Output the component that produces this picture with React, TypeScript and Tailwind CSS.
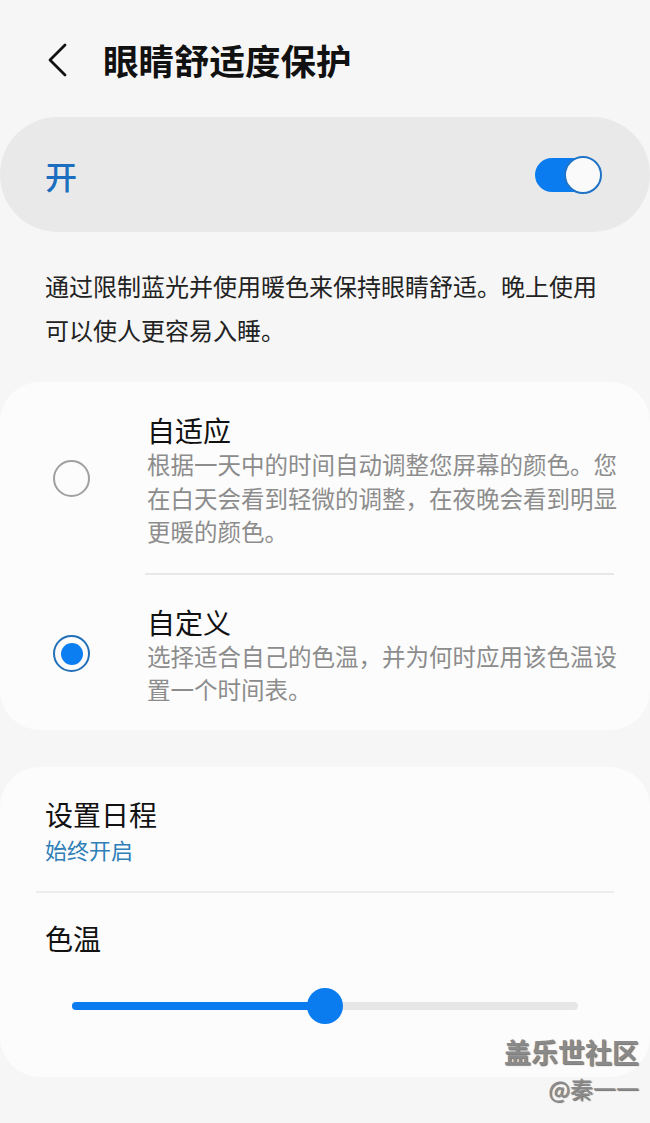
import React from 'react';

const font = { fontFamily: '"Noto Sans CJK SC", "Noto Sans", sans-serif' };

function Radio({ checked }: { checked: boolean }) {
  return checked ? (
    <div className="w-[37px] h-[37px] rounded-full border-[2.5px] border-[#2270b8] flex items-center justify-center">
      <div className="w-[22px] h-[22px] rounded-full bg-[#0b7ef2]" />
    </div>
  ) : (
    <div className="w-[37px] h-[37px] rounded-full border-2 border-[#a0a0a0]" />
  );
}

function Option({ title, desc, checked }: { title: string; desc: string; checked: boolean }) {
  return (
    <div className="flex items-center">
      <div className="pl-[53px] pr-[57px] shrink-0 -mt-[3px]">
        <Radio checked={checked} />
      </div>
      <div className="w-[483px]">
        <div className="text-[28px] leading-[36px] text-[#111]">{title}</div>
        <div className="text-[23.5px] leading-[33.5px] text-[#8c8c8c]">{desc}</div>
      </div>
    </div>
  );
}

export default function App() {
  const temp = 50;
  return (
    <div className="relative min-h-[1123px] w-[650px] bg-[#f6f6f6]" style={font}>
      {/* Header */}
      <div className="h-[117px] flex items-center pt-[3px]">
        <svg width="20" height="34" viewBox="0 0 20 34" className="ml-[47px]" fill="none">
          <polyline points="18,2 3,17 18,32" stroke="#111" strokeWidth="2.8" strokeLinecap="round" strokeLinejoin="round" />
        </svg>
        <h1 className="ml-[36px] text-[35.5px] font-bold text-[#111] leading-none">眼睛舒适度保护</h1>
      </div>

      {/* Master switch */}
      <div className="h-[115px] rounded-[58px] bg-[#e9e9e9] flex items-center justify-between pl-[45px] pr-[49px]">
        <span className="text-[32px] text-[#1c6fbf] font-medium">开</span>
        <div className="w-[66px] h-[34px] rounded-full bg-[#0b7cf0] flex items-center justify-end">
          <div className="w-[38px] h-[38px] rounded-full bg-[#fafafa] border-2 border-[#1f74c7] -mr-[1px]" />
        </div>
      </div>

      <p className="px-[45px] mt-[32px] text-[24px] leading-[44px] text-[#222]">
        通过限制蓝光并使用暖色来保持眼睛舒适。晚上使用可以使人更容易入睡。
      </p>

      {/* Mode card */}
      <div className="mt-[30px] rounded-[40px] bg-[#fcfcfc] pt-[30px] pb-[23px]">
        <Option
          checked={false}
          title="自适应"
          desc="根据一天中的时间自动调整您屏幕的颜色。您在白天会看到轻微的调整，在夜晚会看到明显更暖的颜色。"
        />
        <div className="ml-[145px] mr-[36px] mt-[24px] mb-[29px] h-[2px] bg-[#e8e8e8]" />
        <Option checked={true} title="自定义" desc="选择适合自己的色温，并为何时应用该色温设置一个时间表。" />
      </div>

      {/* Schedule card */}
      <div className="mt-[37px] rounded-[40px] bg-[#fcfcfc] pt-[29px] pb-[53px]">
        <div className="px-[45px]">
          <div className="text-[28px] leading-[36px] text-[#111]">设置日程</div>
          <div className="text-[22px] leading-[30px] text-[#2f7fb8] mt-[2px]">始终开启</div>
        </div>
        <div className="mx-[36px] mt-[27px] h-[2px] bg-[#ececec]" />
        <div className="px-[45px] mt-[27px] text-[28px] leading-[36px] text-[#111]">色温</div>
        <div className="mx-[72px] mt-[32px] h-[36px] relative flex items-center">
          <div className="w-full h-[8px] rounded-full bg-[#e6e6e6] flex">
            <div className="h-full rounded-full bg-[#0b7cf0]" style={{ width: `${temp}%` }} />
          </div>
          <div
            className="absolute top-0 w-[36px] h-[36px] -ml-[18px] rounded-full bg-[#0b7cf0]"
            style={{ left: `${temp}%` }}
          />
        </div>
      </div>

      {/* Watermark */}
      <div className="absolute right-[11px] top-[1034px] flex flex-col items-end text-[#8a8a8a] [text-shadow:1px_1px_1px_rgba(0,0,0,0.55)]">
        <span className="text-[27px] leading-[36px] font-bold">盖乐世社区</span>
        <span className="text-[23px] leading-[32px] mt-[2px]">@秦一一</span>
      </div>
    </div>
  );
}
